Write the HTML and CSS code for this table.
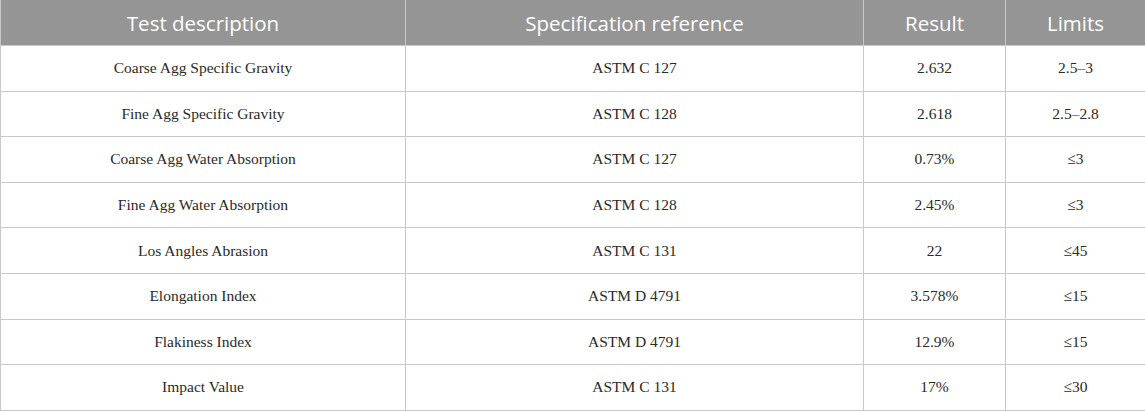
FILE: index.html
```html
<!DOCTYPE html>
<html>
<head>
<meta charset="utf-8">
<link rel="stylesheet" href="styles.css">
</head>
<body>
<table class="spec">
  <colgroup>
    <col class="c1"><col class="c2"><col class="c3"><col class="c4">
  </colgroup>
  <thead>
    <tr><th>Test description</th><th>Specification reference</th><th>Result</th><th>Limits</th></tr>
  </thead>
  <tbody>
    <tr><td>Coarse Agg Specific Gravity</td><td>ASTM C 127</td><td>2.632</td><td>2.5–3</td></tr>
    <tr><td>Fine Agg Specific Gravity</td><td>ASTM C 128</td><td>2.618</td><td>2.5–2.8</td></tr>
    <tr><td>Coarse Agg Water Absorption</td><td>ASTM C 127</td><td>0.73%</td><td>≤3</td></tr>
    <tr><td>Fine Agg Water Absorption</td><td>ASTM C 128</td><td>2.45%</td><td>≤3</td></tr>
    <tr><td>Los Angles Abrasion</td><td>ASTM C 131</td><td>22</td><td>≤45</td></tr>
    <tr><td>Elongation Index</td><td>ASTM D 4791</td><td>3.578%</td><td>≤15</td></tr>
    <tr><td>Flakiness Index</td><td>ASTM D 4791</td><td>12.9%</td><td>≤15</td></tr>
    <tr><td>Impact Value</td><td>ASTM C 131</td><td>17%</td><td>≤30</td></tr>
  </tbody>
</table>
</body>
</html>
```
FILE: styles.css
```css
html, body {
  margin: 0;
  padding: 0;
  background: #fff;
}
.spec {
  width: 1145px;
  border-collapse: collapse;
  table-layout: fixed;
}
.c1 { width: 405px; }
.c2 { width: 458px; }
.c3 { width: 142px; }
.c4 { width: 140px; }
.spec th {
  background: #959595;
  color: #fff;
  font-family: "Open Sans", "Noto Sans", sans-serif;
  font-weight: 400;
  font-size: 20.5px;
  height: 45px;
  padding: 0;
  text-align: center;
  border-left: 1px solid #c8c8c8;
  border-right: 1px solid #c8c8c8;
}
.spec td {
  font-family: "Liberation Serif", "DejaVu Serif", serif;
  font-size: 15.5px;
  color: #2a2a2a;
  height: 44.6px;
  padding: 0;
  text-align: center;
  border: 1px solid #c8c8c8;
}
```
